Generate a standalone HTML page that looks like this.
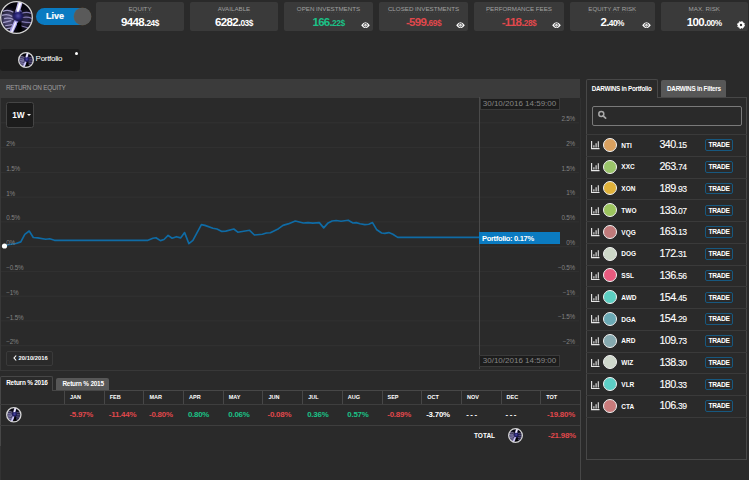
<!DOCTYPE html><html><head><meta charset="utf-8"><style>
*{box-sizing:border-box;margin:0;padding:0}
html,body{width:749px;height:480px;overflow:hidden;background:#2a2a2a;font-family:"Liberation Sans",sans-serif;color:#fff}
.a{position:absolute}
.t{position:absolute;white-space:nowrap;line-height:1}
.card{position:absolute;top:2px;width:88px;height:29px;background:#3a3a3a;border-radius:2px}
.card .lb{position:absolute;left:0;right:0;top:3px;text-align:center;font-size:6.2px;color:#a0a0a0;line-height:8px;white-space:nowrap}
.card .lb span{border-bottom:1px dotted #434343}
.card .v{position:absolute;left:0;right:0;top:14px;text-align:center;font-size:11.5px;letter-spacing:-0.7px;font-weight:bold;color:#fff;white-space:nowrap;line-height:12px}
.card .v small{font-size:8.3px;letter-spacing:-0.45px}
.eye{position:absolute;right:3.3px;top:20.1px;width:9px;height:6.4px}
.g,.card .v.g{color:#1bc287}.r,.card .v.r{color:#e1484c}
.yl{position:absolute;font-size:6.3px;letter-spacing:-0.2px;color:#828282;line-height:8px;white-space:nowrap}
.dt{position:absolute;background:#1c1c1c;border:1px solid #3a3a3a;color:#858585;font-size:8px;line-height:10px;text-align:center;white-space:nowrap}
.mh{position:absolute;top:394px;font-size:5.5px;font-weight:bold;line-height:7px}
.mv{position:absolute;top:410.6px;font-size:7.9px;letter-spacing:-0.22px;font-weight:bold;line-height:8px;white-space:nowrap}
.row .tk{position:absolute;font-size:6.5px;font-weight:bold;line-height:8px}
.tr{position:absolute;width:28px;height:11.4px;border:1.2px solid #17587f;border-radius:2px;font-size:6.6px;font-weight:bold;text-align:center;line-height:9.9px;letter-spacing:-0.38px}
.pr{position:absolute;font-size:10.7px;line-height:12px;white-space:nowrap;letter-spacing:-0.6px;-webkit-text-stroke:0.12px #fff}
.pr small{font-size:8.6px;letter-spacing:-0.35px}
</style></head><body>
<svg class="a" style="left:0px;top:0.5px" width="33" height="33" viewBox="0 0 32 32">
 <defs><radialGradient id="pgm" cx="0.5" cy="0.5" r="0.5"><stop offset="0" stop-color="#5550a8"/><stop offset="0.45" stop-color="#2a2678"/><stop offset="0.8" stop-color="#1a1660" stop-opacity="0.6"/><stop offset="1" stop-color="#1a1450" stop-opacity="0"/></radialGradient>
 <filter id="blm" x="-50%" y="-50%" width="200%" height="200%"><feGaussianBlur stdDeviation="0.75"/></filter><filter id="bbm" x="-50%" y="-50%" width="200%" height="200%"><feGaussianBlur stdDeviation="2.5"/></filter>
 <clipPath id="cpm"><circle cx="16" cy="16" r="15.2"/></clipPath></defs>
 <circle cx="16" cy="16" r="15.2" fill="#06050c"/>
 <g clip-path="url(#cpm)">
 <ellipse cx="8" cy="18" rx="7" ry="9" fill="#7a72b8" opacity="0.6" filter="url(#bbm)"/>
 <ellipse cx="25" cy="18" rx="5" ry="8" fill="#5a5298" opacity="0.45" filter="url(#bbm)"/>
 <g filter="url(#blm)">
 <path d="M3 10 Q8 8 13 11 M2 14 Q7 12 12 15 M4 17 Q9 16 13 18 M3 21 L11 19 M5 24 L12 23 M6 27 L11 26" stroke="#a29cc8" stroke-width="1.2" fill="none"/>
 <path d="M21 12 Q26 10 30 12 M22 16 Q27 15 31 17 M21 20 Q25 21 30 21 M20 24 L27 26" stroke="#8078b0" stroke-width="1.1" fill="none"/>
 <path d="M20 0 L16.5 12" stroke="#c0b8f0" stroke-width="4.5"/>
 <path d="M16 19 L10 32" stroke="#a8a0e8" stroke-width="4"/>
 <path d="M18.5 21 L19.5 32" stroke="#000" stroke-width="4"/>
 </g>
 <circle cx="17.5" cy="14.5" r="6" fill="url(#pgm)"/>
 <path d="M16 10 Q18 8.5 21 10" stroke="#9088e0" stroke-width="1" fill="none"/>
 <path d="M20 0.5 L17 10.5" stroke="#fff" stroke-width="2"/>
 <path d="M15.3 20.5 L11 31" stroke="#f0ecff" stroke-width="1.5"/>
 </g>
 <circle cx="16" cy="16" r="15.36" fill="none" stroke="#d4d4d4" stroke-width="1.27"/>
</svg>
<div class="a" style="left:36px;top:8px;width:55px;height:17px;border-radius:9px;background:#0a7bc2"></div>
<div class="a" style="left:74px;top:8px;width:17px;height:17px;border-radius:50%;background:#5a5a5a;box-shadow:0 0 0 0.5px rgba(130,95,60,0.6)"></div>
<div class="t" style="left:46px;top:12px;font-size:9px;font-weight:bold;-webkit-text-stroke:0.2px #fff">Live</div>
<div class="card" style="left:96px;width:88px"><div class="lb"><span>EQUITY</span></div><div class="v ">9448.<small>24$</small></div></div>
<div class="card" style="left:190px;width:88px"><div class="lb"><span>AVAILABLE</span></div><div class="v ">6282.<small>03$</small></div></div>
<div class="card" style="left:284px;width:89px"><div class="lb"><span>OPEN INVESTMENTS</span></div><div class="v g">166.<small>22$</small></div><svg class="eye" viewBox="0 0 9 6.4"><path d="M0.2 3.2 Q4.5 -2.9 8.8 3.2 Q4.5 9.3 0.2 3.2Z" fill="#fff"/><circle cx="4.5" cy="3.2" r="1.75" fill="none" stroke="#3a3a3a" stroke-width="0.9"/><circle cx="4.5" cy="3.2" r="0.7" fill="#3a3a3a" fill-opacity="0.3"/></svg></div>
<div class="card" style="left:379px;width:89px"><div class="lb"><span>CLOSED INVESTMENTS</span></div><div class="v r">-599.<small>69$</small></div><svg class="eye" viewBox="0 0 9 6.4"><path d="M0.2 3.2 Q4.5 -2.9 8.8 3.2 Q4.5 9.3 0.2 3.2Z" fill="#fff"/><circle cx="4.5" cy="3.2" r="1.75" fill="none" stroke="#3a3a3a" stroke-width="0.9"/><circle cx="4.5" cy="3.2" r="0.7" fill="#3a3a3a" fill-opacity="0.3"/></svg></div>
<div class="card" style="left:474px;width:90px"><div class="lb"><span>PERFORMANCE FEES</span></div><div class="v r">-118.<small>28$</small></div><svg class="eye" viewBox="0 0 9 6.4"><path d="M0.2 3.2 Q4.5 -2.9 8.8 3.2 Q4.5 9.3 0.2 3.2Z" fill="#fff"/><circle cx="4.5" cy="3.2" r="1.75" fill="none" stroke="#3a3a3a" stroke-width="0.9"/><circle cx="4.5" cy="3.2" r="0.7" fill="#3a3a3a" fill-opacity="0.3"/></svg></div>
<div class="card" style="left:570px;width:84.5px"><div class="lb"><span>EQUITY AT RISK</span></div><div class="v ">2.<small>40%</small></div><svg class="eye" viewBox="0 0 9 6.4"><path d="M0.2 3.2 Q4.5 -2.9 8.8 3.2 Q4.5 9.3 0.2 3.2Z" fill="#fff"/><circle cx="4.5" cy="3.2" r="1.75" fill="none" stroke="#3a3a3a" stroke-width="0.9"/><circle cx="4.5" cy="3.2" r="0.7" fill="#3a3a3a" fill-opacity="0.3"/></svg></div>
<div class="card" style="left:660.5px;width:87.5px"><div class="lb"><span>MAX. RISK</span></div><div class="v ">100.<small>00%</small></div><svg class="eye" style="width:8px;height:8px;top:19px;right:2.75px" viewBox="0 0 16 16"><circle cx="8" cy="8" r="7" fill="none" stroke="#fff" stroke-width="2" stroke-dasharray="3 2.5"/><circle cx="8" cy="8" r="4.5" fill="none" stroke="#fff" stroke-width="4.2"/></svg></div>
<div class="a" style="left:0;top:49px;width:80px;height:22px;background:#1d1d1d;border-radius:3px"></div>
<svg class="a" style="left:18px;top:52px" width="16" height="16" viewBox="0 0 32 32">
 <defs><radialGradient id="pgp" cx="0.5" cy="0.5" r="0.5"><stop offset="0" stop-color="#5550a8"/><stop offset="0.45" stop-color="#2a2678"/><stop offset="0.8" stop-color="#1a1660" stop-opacity="0.6"/><stop offset="1" stop-color="#1a1450" stop-opacity="0"/></radialGradient>
 <filter id="blp" x="-50%" y="-50%" width="200%" height="200%"><feGaussianBlur stdDeviation="0.75"/></filter><filter id="bbp" x="-50%" y="-50%" width="200%" height="200%"><feGaussianBlur stdDeviation="2.5"/></filter>
 <clipPath id="cpp"><circle cx="16" cy="16" r="15.2"/></clipPath></defs>
 <circle cx="16" cy="16" r="15.2" fill="#06050c"/>
 <g clip-path="url(#cpp)">
 <ellipse cx="8" cy="18" rx="7" ry="9" fill="#7a72b8" opacity="0.6" filter="url(#bbp)"/>
 <ellipse cx="25" cy="18" rx="5" ry="8" fill="#5a5298" opacity="0.45" filter="url(#bbp)"/>
 <g filter="url(#blp)">
 <path d="M3 10 Q8 8 13 11 M2 14 Q7 12 12 15 M4 17 Q9 16 13 18 M3 21 L11 19 M5 24 L12 23 M6 27 L11 26" stroke="#a29cc8" stroke-width="1.2" fill="none"/>
 <path d="M21 12 Q26 10 30 12 M22 16 Q27 15 31 17 M21 20 Q25 21 30 21 M20 24 L27 26" stroke="#8078b0" stroke-width="1.1" fill="none"/>
 <path d="M20 0 L16.5 12" stroke="#c0b8f0" stroke-width="4.5"/>
 <path d="M16 19 L10 32" stroke="#a8a0e8" stroke-width="4"/>
 <path d="M18.5 21 L19.5 32" stroke="#000" stroke-width="4"/>
 </g>
 <circle cx="17.5" cy="14.5" r="6" fill="url(#pgp)"/>
 <path d="M16 10 Q18 8.5 21 10" stroke="#9088e0" stroke-width="1" fill="none"/>
 <path d="M20 0.5 L17 10.5" stroke="#fff" stroke-width="2"/>
 <path d="M15.3 20.5 L11 31" stroke="#f0ecff" stroke-width="1.5"/>
 </g>
 <circle cx="16" cy="16" r="14.69" fill="none" stroke="#d4d4d4" stroke-width="2.62"/>
</svg>
<div class="t" style="left:35.6px;top:55.3px;font-size:8px;letter-spacing:-0.3px">Portfolio</div>
<div class="a" style="left:74.5px;top:51.5px;width:3px;height:3px;border-radius:50%;background:#fff"></div>
<div class="a" style="left:0;top:79px;width:580px;height:18.5px;background:#3b3b3b"></div>
<div class="t" style="left:5.9px;top:85.3px;font-size:6.4px;letter-spacing:-0.24px;color:#a0a0a0">RETURN ON EQUITY</div>
<div class="a" style="left:0;top:97.5px;width:581px;height:273.5px;background:#2a2a2a;border-left:1px solid #383838;border-right:1px solid #313131;border-bottom:1px solid #383838"></div>
<svg class="a" style="left:0;top:0" width="749" height="480"><line x1="1" y1="122.8" x2="579" y2="122.8" stroke="#323232" stroke-width="1"/><line x1="1" y1="147.57" x2="579" y2="147.57" stroke="#323232" stroke-width="1"/><line x1="1" y1="172.34" x2="579" y2="172.34" stroke="#323232" stroke-width="1"/><line x1="1" y1="197.11" x2="579" y2="197.11" stroke="#323232" stroke-width="1"/><line x1="1" y1="221.88" x2="579" y2="221.88" stroke="#323232" stroke-width="1"/><line x1="1" y1="246.64999999999998" x2="579" y2="246.64999999999998" stroke="#323232" stroke-width="1"/><line x1="1" y1="271.42" x2="579" y2="271.42" stroke="#323232" stroke-width="1"/><line x1="1" y1="296.19" x2="579" y2="296.19" stroke="#323232" stroke-width="1"/><line x1="1" y1="320.96" x2="579" y2="320.96" stroke="#323232" stroke-width="1"/><line x1="1" y1="345.73" x2="579" y2="345.73" stroke="#323232" stroke-width="1"/><line x1="479.5" y1="97" x2="479.5" y2="369" stroke="#4a4a4a" stroke-width="1"/><path d="M4.5 245.9 L8.0 244.7 L16.0 243.5 L20.8 241.9 L24.8 234.3 L29.2 231.0 L33.3 237.5 L37.7 237.9 L45.7 239.3 L49.7 238.8 L54.5 240.3 L148.0 240.3 L152.9 238.3 L156.0 237.7 L160.4 240.6 L164.0 239.5 L168.1 235.4 L172.1 238.2 L176.4 236.7 L180.6 237.9 L184.6 232.6 L188.9 243.6 L192.9 240.3 L201.4 224.6 L204.9 225.4 L212.9 228.2 L217.0 229.0 L221.8 231.4 L225.8 231.1 L233.8 229.0 L237.8 232.2 L249.6 230.3 L254.4 235.0 L262.4 234.2 L266.4 233.0 L270.4 232.7 L278.5 228.7 L283.0 225.4 L288.1 223.9 L295.3 221.0 L303.3 223.0 L308.1 222.6 L312.9 223.1 L319.3 222.6 L323.7 227.9 L328.1 222.9 L332.1 221.0 L336.2 220.5 L341.0 221.3 L348.2 220.2 L353.0 223.0 L356.2 222.6 L360.0 223.8 L364.8 224.6 L368.8 224.2 L372.5 222.6 L376.8 229.8 L381.6 233.0 L384.8 233.4 L388.8 232.6 L392.9 234.3 L397.7 237.4 L480.0 237.4" fill="none" stroke="#0f6ba5" stroke-width="1.65" stroke-linejoin="round"/><circle cx="4.5" cy="246" r="2.6" fill="#fff"/></svg>
<div class="yl" style="left:6.3px;top:139.90px">2%</div>
<div class="yl" style="left:6.3px;top:164.70px">1.5%</div>
<div class="yl" style="left:6.3px;top:189.50px">1%</div>
<div class="yl" style="left:6.3px;top:214.30px">0.5%</div>
<div class="yl" style="left:6.3px;top:239.10px">0%</div>
<div class="yl" style="left:6.3px;top:263.90px">&#8722;0.5%</div>
<div class="yl" style="left:6.3px;top:288.70px">&#8722;1%</div>
<div class="yl" style="left:6.3px;top:313.50px">&#8722;1.5%</div>
<div class="yl" style="left:6.3px;top:338.30px">&#8722;2%</div>
<div class="yl" style="left:475px;width:100px;text-align:right;top:114.90px">2.5%</div>
<div class="yl" style="left:475px;width:100px;text-align:right;top:139.70px">2%</div>
<div class="yl" style="left:475px;width:100px;text-align:right;top:164.50px">1.5%</div>
<div class="yl" style="left:475px;width:100px;text-align:right;top:189.30px">1%</div>
<div class="yl" style="left:475px;width:100px;text-align:right;top:214.10px">0.5%</div>
<div class="yl" style="left:475px;width:100px;text-align:right;top:238.90px">0%</div>
<div class="yl" style="left:475px;width:100px;text-align:right;top:263.70px">&#8722;0.5%</div>
<div class="yl" style="left:475px;width:100px;text-align:right;top:288.50px">&#8722;1%</div>
<div class="yl" style="left:475px;width:100px;text-align:right;top:313.30px">&#8722;1.5%</div>
<div class="yl" style="left:475px;width:100px;text-align:right;top:338.10px">&#8722;2%</div>
<div class="a" style="left:6px;top:102.3px;width:28.2px;height:25.4px;background:#1c1c1c;border:1px solid #454545;border-radius:2.5px"></div>
<div class="t" style="left:12.2px;top:111.2px;font-size:8.3px;font-weight:bold">1W</div>
<div class="a" style="left:26.5px;top:114.3px;width:0;height:0;border-left:2.1px solid transparent;border-right:2.1px solid transparent;border-top:2.4px solid #fff"></div>
<div class="dt" style="left:479.5px;top:97.5px;width:80px;height:12px">30/10/2016 14:59:00</div>
<div class="dt" style="left:479px;top:354.7px;width:81px;height:12.3px">30/10/2016 14:59:00</div>
<div class="a" style="left:479px;top:232px;width:81px;height:12px;background:#0b7bc1"></div>
<div class="t" style="left:482px;top:234.9px;font-size:7.6px;font-weight:bold;letter-spacing:-0.35px">Portfolio: 0.17%</div>
<div class="a" style="left:6px;top:351px;width:47px;height:14.5px;border:1px solid #3a3a3a;border-radius:2px"></div>
<svg class="a" style="left:12.5px;top:355.3px" width="4" height="6" viewBox="0 0 4 6"><path d="M3.2 0.5 L1 3 L3.2 5.5" fill="none" stroke="#fff" stroke-width="1.1"/></svg>
<div class="t" style="left:18.6px;top:355.8px;font-size:5.8px;font-weight:bold">20/10/2016</div>
<div class="a" style="left:0;top:376px;width:53px;height:14.5px;border:1px solid #474747;border-bottom:none;border-radius:2px 2px 0 0;background:#2a2a2a;z-index:2"></div>
<div class="t" style="left:6.2px;top:380.3px;font-size:6.4px;font-weight:bold;letter-spacing:-0.2px;z-index:3">Return % 2016</div>
<div class="a" style="left:56px;top:377.5px;width:53px;height:12.5px;background:#575757;border-radius:2px 2px 0 0"></div>
<div class="t" style="left:62.4px;top:380.8px;font-size:6.4px;font-weight:bold;letter-spacing:-0.2px">Return % 2015</div>
<div class="a" style="left:0;top:390px;width:581px;height:90px;border-top:1px solid #474747;border-right:1px solid #474747"></div>
<div class="a" style="left:0;top:390px;width:1px;height:56px;background:#474747"></div>
<div class="a" style="left:0;top:446px;width:1px;height:34px;background:#333"></div>
<div class="a" style="left:0;top:404px;width:580px;height:1px;background:#3e3e3e"></div>
<div class="a" style="left:0;top:425px;width:580px;height:1px;background:#3e3e3e"></div>
<div class="a" style="left:64.00px;top:390px;width:1px;height:14px;background:#474747"></div>
<div class="mh" style="left:70.00px">JAN</div>
<div class="mv r" style="left:69.40px">-5.97%</div>
<div class="a" style="left:103.69px;top:390px;width:1px;height:14px;background:#474747"></div>
<div class="mh" style="left:109.69px">FEB</div>
<div class="mv r" style="left:108.80px">-11.44%</div>
<div class="a" style="left:143.38px;top:390px;width:1px;height:14px;background:#474747"></div>
<div class="mh" style="left:149.38px">MAR</div>
<div class="mv r" style="left:149.00px">-0.80%</div>
<div class="a" style="left:183.08px;top:390px;width:1px;height:14px;background:#474747"></div>
<div class="mh" style="left:189.08px">APR</div>
<div class="mv g" style="left:187.90px">0.80%</div>
<div class="a" style="left:222.77px;top:390px;width:1px;height:14px;background:#474747"></div>
<div class="mh" style="left:228.77px">MAY</div>
<div class="mv g" style="left:228.30px">0.06%</div>
<div class="a" style="left:262.46px;top:390px;width:1px;height:14px;background:#474747"></div>
<div class="mh" style="left:268.46px">JUN</div>
<div class="mv r" style="left:267.50px">-0.08%</div>
<div class="a" style="left:302.15px;top:390px;width:1px;height:14px;background:#474747"></div>
<div class="mh" style="left:308.15px">JUL</div>
<div class="mv g" style="left:307.20px">0.36%</div>
<div class="a" style="left:341.85px;top:390px;width:1px;height:14px;background:#474747"></div>
<div class="mh" style="left:347.85px">AUG</div>
<div class="mv g" style="left:347.30px">0.57%</div>
<div class="a" style="left:381.54px;top:390px;width:1px;height:14px;background:#474747"></div>
<div class="mh" style="left:387.54px">SEP</div>
<div class="mv r" style="left:387.30px">-0.89%</div>
<div class="a" style="left:421.23px;top:390px;width:1px;height:14px;background:#474747"></div>
<div class="mh" style="left:427.23px">OCT</div>
<div class="mv " style="left:426.20px">-3.70%</div>
<div class="a" style="left:460.92px;top:390px;width:1px;height:14px;background:#474747"></div>
<div class="mh" style="left:466.92px">NOV</div>
<div class="mv " style="left:466.20px;letter-spacing:1.5px">---</div>
<div class="a" style="left:500.62px;top:390px;width:1px;height:14px;background:#474747"></div>
<div class="mh" style="left:506.62px">DEC</div>
<div class="mv " style="left:505.50px;letter-spacing:1.5px">---</div>
<div class="a" style="left:540.31px;top:390px;width:1px;height:14px;background:#474747"></div>
<div class="mh" style="left:546.31px">TOT</div>
<div class="mv r" style="left:547.10px">-19.80%</div>
<svg class="a" style="left:6px;top:407px" width="15.6" height="15.6" viewBox="0 0 32 32">
 <defs><radialGradient id="pgt1" cx="0.5" cy="0.5" r="0.5"><stop offset="0" stop-color="#5550a8"/><stop offset="0.45" stop-color="#2a2678"/><stop offset="0.8" stop-color="#1a1660" stop-opacity="0.6"/><stop offset="1" stop-color="#1a1450" stop-opacity="0"/></radialGradient>
 <filter id="blt1" x="-50%" y="-50%" width="200%" height="200%"><feGaussianBlur stdDeviation="0.75"/></filter><filter id="bbt1" x="-50%" y="-50%" width="200%" height="200%"><feGaussianBlur stdDeviation="2.5"/></filter>
 <clipPath id="cpt1"><circle cx="16" cy="16" r="15.2"/></clipPath></defs>
 <circle cx="16" cy="16" r="15.2" fill="#06050c"/>
 <g clip-path="url(#cpt1)">
 <ellipse cx="8" cy="18" rx="7" ry="9" fill="#7a72b8" opacity="0.6" filter="url(#bbt1)"/>
 <ellipse cx="25" cy="18" rx="5" ry="8" fill="#5a5298" opacity="0.45" filter="url(#bbt1)"/>
 <g filter="url(#blt1)">
 <path d="M3 10 Q8 8 13 11 M2 14 Q7 12 12 15 M4 17 Q9 16 13 18 M3 21 L11 19 M5 24 L12 23 M6 27 L11 26" stroke="#a29cc8" stroke-width="1.2" fill="none"/>
 <path d="M21 12 Q26 10 30 12 M22 16 Q27 15 31 17 M21 20 Q25 21 30 21 M20 24 L27 26" stroke="#8078b0" stroke-width="1.1" fill="none"/>
 <path d="M20 0 L16.5 12" stroke="#c0b8f0" stroke-width="4.5"/>
 <path d="M16 19 L10 32" stroke="#a8a0e8" stroke-width="4"/>
 <path d="M18.5 21 L19.5 32" stroke="#000" stroke-width="4"/>
 </g>
 <circle cx="17.5" cy="14.5" r="6" fill="url(#pgt1)"/>
 <path d="M16 10 Q18 8.5 21 10" stroke="#9088e0" stroke-width="1" fill="none"/>
 <path d="M20 0.5 L17 10.5" stroke="#fff" stroke-width="2"/>
 <path d="M15.3 20.5 L11 31" stroke="#f0ecff" stroke-width="1.5"/>
 </g>
 <circle cx="16" cy="16" r="14.65" fill="none" stroke="#d4d4d4" stroke-width="2.69"/>
</svg>
<div class="t" style="left:474px;top:432.5px;font-size:6.5px;font-weight:bold">TOTAL</div>
<svg class="a" style="left:508px;top:428px" width="15" height="15" viewBox="0 0 32 32">
 <defs><radialGradient id="pgt2" cx="0.5" cy="0.5" r="0.5"><stop offset="0" stop-color="#5550a8"/><stop offset="0.45" stop-color="#2a2678"/><stop offset="0.8" stop-color="#1a1660" stop-opacity="0.6"/><stop offset="1" stop-color="#1a1450" stop-opacity="0"/></radialGradient>
 <filter id="blt2" x="-50%" y="-50%" width="200%" height="200%"><feGaussianBlur stdDeviation="0.75"/></filter><filter id="bbt2" x="-50%" y="-50%" width="200%" height="200%"><feGaussianBlur stdDeviation="2.5"/></filter>
 <clipPath id="cpt2"><circle cx="16" cy="16" r="15.2"/></clipPath></defs>
 <circle cx="16" cy="16" r="15.2" fill="#06050c"/>
 <g clip-path="url(#cpt2)">
 <ellipse cx="8" cy="18" rx="7" ry="9" fill="#7a72b8" opacity="0.6" filter="url(#bbt2)"/>
 <ellipse cx="25" cy="18" rx="5" ry="8" fill="#5a5298" opacity="0.45" filter="url(#bbt2)"/>
 <g filter="url(#blt2)">
 <path d="M3 10 Q8 8 13 11 M2 14 Q7 12 12 15 M4 17 Q9 16 13 18 M3 21 L11 19 M5 24 L12 23 M6 27 L11 26" stroke="#a29cc8" stroke-width="1.2" fill="none"/>
 <path d="M21 12 Q26 10 30 12 M22 16 Q27 15 31 17 M21 20 Q25 21 30 21 M20 24 L27 26" stroke="#8078b0" stroke-width="1.1" fill="none"/>
 <path d="M20 0 L16.5 12" stroke="#c0b8f0" stroke-width="4.5"/>
 <path d="M16 19 L10 32" stroke="#a8a0e8" stroke-width="4"/>
 <path d="M18.5 21 L19.5 32" stroke="#000" stroke-width="4"/>
 </g>
 <circle cx="17.5" cy="14.5" r="6" fill="url(#pgt2)"/>
 <path d="M16 10 Q18 8.5 21 10" stroke="#9088e0" stroke-width="1" fill="none"/>
 <path d="M20 0.5 L17 10.5" stroke="#fff" stroke-width="2"/>
 <path d="M15.3 20.5 L11 31" stroke="#f0ecff" stroke-width="1.5"/>
 </g>
 <circle cx="16" cy="16" r="14.60" fill="none" stroke="#d4d4d4" stroke-width="2.80"/>
</svg>
<div class="mv r" style="left:548px;top:432px">-21.98%</div>
<div class="a" style="left:586px;top:97px;width:161px;height:363px;border:1px solid #474747"></div>
<div class="a" style="left:586px;top:79px;width:72px;height:19px;border:1px solid #474747;border-bottom:none;background:#2a2a2a;border-radius:2px 2px 0 0"></div>
<div class="t" style="left:591.7px;top:85.8px;font-size:6.3px;letter-spacing:-0.25px;font-weight:bold">DARWINS in Portfolio</div>
<div class="a" style="left:661px;top:80px;width:65px;height:17px;background:#575757;border-radius:2px 2px 0 0"></div>
<div class="t" style="left:667px;top:85.8px;font-size:6.3px;letter-spacing:-0.23px;font-weight:bold">DARWINS in Filters</div>
<div class="a" style="left:592px;top:106px;width:150px;height:20px;border:1px solid #7a7a7a;border-radius:2px"></div>
<svg class="a" style="left:597px;top:110.3px" width="10" height="10" viewBox="0 0 10 10"><circle cx="4.3" cy="4" r="2.5" fill="none" stroke="#a8a8a8" stroke-width="1.5"/><line x1="6.1" y1="5.9" x2="8.6" y2="8.1" stroke="#a8a8a8" stroke-width="1.7" stroke-linecap="round"/></svg>
<div class="a" style="left:586px;top:134.20px;width:161px;height:1px;background:#3a3a3a"></div>
<svg class="a" style="left:590.5px;top:141.47px" width="9" height="8.5" viewBox="0 0 9 8.5"><path d="M0.6 0 V7.6 H8.5" fill="none" stroke="#e6e6e6" stroke-width="1.15"/><path d="M2.9 4.2 V6.5 M5.1 2.2 V6.5 M7.3 0.2 V6.5" stroke="#e6e6e6" stroke-width="1.1"/></svg>
<div class="a" style="left:603px;top:137.88px;width:14px;height:14px;border-radius:50%;background:#d9a05f;border:1.6px solid #f2f2f2"></div>
<div class="t" style="left:621.3px;top:142.67px;font-size:6.5px;font-weight:bold">NTI</div>
<div class="pr" style="left:659.5px;top:138.27px">340.<small>15</small></div>
<div class="tr" style="left:705px;top:139.38px">TRADE</div>
<div class="a" style="left:586px;top:155.95px;width:161px;height:1px;background:#3a3a3a"></div>
<svg class="a" style="left:590.5px;top:163.22px" width="9" height="8.5" viewBox="0 0 9 8.5"><path d="M0.6 0 V7.6 H8.5" fill="none" stroke="#e6e6e6" stroke-width="1.15"/><path d="M2.9 4.2 V6.5 M5.1 2.2 V6.5 M7.3 0.2 V6.5" stroke="#e6e6e6" stroke-width="1.1"/></svg>
<div class="a" style="left:603px;top:159.62px;width:14px;height:14px;border-radius:50%;background:#9ac46a;border:1.6px solid #f2f2f2"></div>
<div class="t" style="left:621.3px;top:164.42px;font-size:6.5px;font-weight:bold">XXC</div>
<div class="pr" style="left:659.5px;top:160.02px">263.<small>74</small></div>
<div class="tr" style="left:705px;top:161.12px">TRADE</div>
<div class="a" style="left:586px;top:177.70px;width:161px;height:1px;background:#3a3a3a"></div>
<svg class="a" style="left:590.5px;top:184.97px" width="9" height="8.5" viewBox="0 0 9 8.5"><path d="M0.6 0 V7.6 H8.5" fill="none" stroke="#e6e6e6" stroke-width="1.15"/><path d="M2.9 4.2 V6.5 M5.1 2.2 V6.5 M7.3 0.2 V6.5" stroke="#e6e6e6" stroke-width="1.1"/></svg>
<div class="a" style="left:603px;top:181.38px;width:14px;height:14px;border-radius:50%;background:#e0b23a;border:1.6px solid #f2f2f2"></div>
<div class="t" style="left:621.3px;top:186.17px;font-size:6.5px;font-weight:bold">XON</div>
<div class="pr" style="left:659.5px;top:181.77px">189.<small>93</small></div>
<div class="tr" style="left:705px;top:182.88px">TRADE</div>
<div class="a" style="left:586px;top:199.45px;width:161px;height:1px;background:#3a3a3a"></div>
<svg class="a" style="left:590.5px;top:206.72px" width="9" height="8.5" viewBox="0 0 9 8.5"><path d="M0.6 0 V7.6 H8.5" fill="none" stroke="#e6e6e6" stroke-width="1.15"/><path d="M2.9 4.2 V6.5 M5.1 2.2 V6.5 M7.3 0.2 V6.5" stroke="#e6e6e6" stroke-width="1.1"/></svg>
<div class="a" style="left:603px;top:203.12px;width:14px;height:14px;border-radius:50%;background:#9cc45e;border:1.6px solid #f2f2f2"></div>
<div class="t" style="left:621.3px;top:207.92px;font-size:6.5px;font-weight:bold">TWO</div>
<div class="pr" style="left:659.5px;top:203.52px">133.<small>07</small></div>
<div class="tr" style="left:705px;top:204.62px">TRADE</div>
<div class="a" style="left:586px;top:221.20px;width:161px;height:1px;background:#3a3a3a"></div>
<svg class="a" style="left:590.5px;top:228.47px" width="9" height="8.5" viewBox="0 0 9 8.5"><path d="M0.6 0 V7.6 H8.5" fill="none" stroke="#e6e6e6" stroke-width="1.15"/><path d="M2.9 4.2 V6.5 M5.1 2.2 V6.5 M7.3 0.2 V6.5" stroke="#e6e6e6" stroke-width="1.1"/></svg>
<div class="a" style="left:603px;top:224.88px;width:14px;height:14px;border-radius:50%;background:#c07a7a;border:1.6px solid #f2f2f2"></div>
<div class="t" style="left:621.3px;top:229.67px;font-size:6.5px;font-weight:bold">VQG</div>
<div class="pr" style="left:659.5px;top:225.27px">163.<small>13</small></div>
<div class="tr" style="left:705px;top:226.38px">TRADE</div>
<div class="a" style="left:586px;top:242.95px;width:161px;height:1px;background:#3a3a3a"></div>
<svg class="a" style="left:590.5px;top:250.22px" width="9" height="8.5" viewBox="0 0 9 8.5"><path d="M0.6 0 V7.6 H8.5" fill="none" stroke="#e6e6e6" stroke-width="1.15"/><path d="M2.9 4.2 V6.5 M5.1 2.2 V6.5 M7.3 0.2 V6.5" stroke="#e6e6e6" stroke-width="1.1"/></svg>
<div class="a" style="left:603px;top:246.62px;width:14px;height:14px;border-radius:50%;background:#cdd8c8;border:1.6px solid #f2f2f2"></div>
<div class="t" style="left:621.3px;top:251.42px;font-size:6.5px;font-weight:bold">DOG</div>
<div class="pr" style="left:659.5px;top:247.02px">172.<small>31</small></div>
<div class="tr" style="left:705px;top:248.12px">TRADE</div>
<div class="a" style="left:586px;top:264.70px;width:161px;height:1px;background:#3a3a3a"></div>
<svg class="a" style="left:590.5px;top:271.97px" width="9" height="8.5" viewBox="0 0 9 8.5"><path d="M0.6 0 V7.6 H8.5" fill="none" stroke="#e6e6e6" stroke-width="1.15"/><path d="M2.9 4.2 V6.5 M5.1 2.2 V6.5 M7.3 0.2 V6.5" stroke="#e6e6e6" stroke-width="1.1"/></svg>
<div class="a" style="left:603px;top:268.38px;width:14px;height:14px;border-radius:50%;background:#e85a7e;border:1.6px solid #f2f2f2"></div>
<div class="t" style="left:621.3px;top:273.18px;font-size:6.5px;font-weight:bold">SSL</div>
<div class="pr" style="left:659.5px;top:268.77px">136.<small>56</small></div>
<div class="tr" style="left:705px;top:269.88px">TRADE</div>
<div class="a" style="left:586px;top:286.45px;width:161px;height:1px;background:#3a3a3a"></div>
<svg class="a" style="left:590.5px;top:293.72px" width="9" height="8.5" viewBox="0 0 9 8.5"><path d="M0.6 0 V7.6 H8.5" fill="none" stroke="#e6e6e6" stroke-width="1.15"/><path d="M2.9 4.2 V6.5 M5.1 2.2 V6.5 M7.3 0.2 V6.5" stroke="#e6e6e6" stroke-width="1.1"/></svg>
<div class="a" style="left:603px;top:290.12px;width:14px;height:14px;border-radius:50%;background:#5ccfc2;border:1.6px solid #f2f2f2"></div>
<div class="t" style="left:621.3px;top:294.93px;font-size:6.5px;font-weight:bold">AWD</div>
<div class="pr" style="left:659.5px;top:290.52px">154.<small>45</small></div>
<div class="tr" style="left:705px;top:291.62px">TRADE</div>
<div class="a" style="left:586px;top:308.20px;width:161px;height:1px;background:#3a3a3a"></div>
<svg class="a" style="left:590.5px;top:315.47px" width="9" height="8.5" viewBox="0 0 9 8.5"><path d="M0.6 0 V7.6 H8.5" fill="none" stroke="#e6e6e6" stroke-width="1.15"/><path d="M2.9 4.2 V6.5 M5.1 2.2 V6.5 M7.3 0.2 V6.5" stroke="#e6e6e6" stroke-width="1.1"/></svg>
<div class="a" style="left:603px;top:311.88px;width:14px;height:14px;border-radius:50%;background:#6aa9b4;border:1.6px solid #f2f2f2"></div>
<div class="t" style="left:621.3px;top:316.68px;font-size:6.5px;font-weight:bold">DGA</div>
<div class="pr" style="left:659.5px;top:312.27px">154.<small>29</small></div>
<div class="tr" style="left:705px;top:313.38px">TRADE</div>
<div class="a" style="left:586px;top:329.95px;width:161px;height:1px;background:#3a3a3a"></div>
<svg class="a" style="left:590.5px;top:337.22px" width="9" height="8.5" viewBox="0 0 9 8.5"><path d="M0.6 0 V7.6 H8.5" fill="none" stroke="#e6e6e6" stroke-width="1.15"/><path d="M2.9 4.2 V6.5 M5.1 2.2 V6.5 M7.3 0.2 V6.5" stroke="#e6e6e6" stroke-width="1.1"/></svg>
<div class="a" style="left:603px;top:333.62px;width:14px;height:14px;border-radius:50%;background:#86aab0;border:1.6px solid #f2f2f2"></div>
<div class="t" style="left:621.3px;top:338.43px;font-size:6.5px;font-weight:bold">ARD</div>
<div class="pr" style="left:659.5px;top:334.02px">109.<small>73</small></div>
<div class="tr" style="left:705px;top:335.12px">TRADE</div>
<div class="a" style="left:586px;top:351.70px;width:161px;height:1px;background:#3a3a3a"></div>
<svg class="a" style="left:590.5px;top:358.97px" width="9" height="8.5" viewBox="0 0 9 8.5"><path d="M0.6 0 V7.6 H8.5" fill="none" stroke="#e6e6e6" stroke-width="1.15"/><path d="M2.9 4.2 V6.5 M5.1 2.2 V6.5 M7.3 0.2 V6.5" stroke="#e6e6e6" stroke-width="1.1"/></svg>
<div class="a" style="left:603px;top:355.38px;width:14px;height:14px;border-radius:50%;background:#cfd8cc;border:1.6px solid #f2f2f2"></div>
<div class="t" style="left:621.3px;top:360.18px;font-size:6.5px;font-weight:bold">WIZ</div>
<div class="pr" style="left:659.5px;top:355.77px">138.<small>30</small></div>
<div class="tr" style="left:705px;top:356.88px">TRADE</div>
<div class="a" style="left:586px;top:373.45px;width:161px;height:1px;background:#3a3a3a"></div>
<svg class="a" style="left:590.5px;top:380.72px" width="9" height="8.5" viewBox="0 0 9 8.5"><path d="M0.6 0 V7.6 H8.5" fill="none" stroke="#e6e6e6" stroke-width="1.15"/><path d="M2.9 4.2 V6.5 M5.1 2.2 V6.5 M7.3 0.2 V6.5" stroke="#e6e6e6" stroke-width="1.1"/></svg>
<div class="a" style="left:603px;top:377.12px;width:14px;height:14px;border-radius:50%;background:#5dcfc6;border:1.6px solid #f2f2f2"></div>
<div class="t" style="left:621.3px;top:381.93px;font-size:6.5px;font-weight:bold">VLR</div>
<div class="pr" style="left:659.5px;top:377.52px">180.<small>33</small></div>
<div class="tr" style="left:705px;top:378.62px">TRADE</div>
<div class="a" style="left:586px;top:395.20px;width:161px;height:1px;background:#3a3a3a"></div>
<svg class="a" style="left:590.5px;top:402.47px" width="9" height="8.5" viewBox="0 0 9 8.5"><path d="M0.6 0 V7.6 H8.5" fill="none" stroke="#e6e6e6" stroke-width="1.15"/><path d="M2.9 4.2 V6.5 M5.1 2.2 V6.5 M7.3 0.2 V6.5" stroke="#e6e6e6" stroke-width="1.1"/></svg>
<div class="a" style="left:603px;top:398.88px;width:14px;height:14px;border-radius:50%;background:#c97b7b;border:1.6px solid #f2f2f2"></div>
<div class="t" style="left:621.3px;top:403.68px;font-size:6.5px;font-weight:bold">CTA</div>
<div class="pr" style="left:659.5px;top:399.27px">106.<small>39</small></div>
<div class="tr" style="left:705px;top:400.38px">TRADE</div>
<div class="a" style="left:586px;top:416.95px;width:161px;height:1px;background:#3a3a3a"></div>
</body></html>
